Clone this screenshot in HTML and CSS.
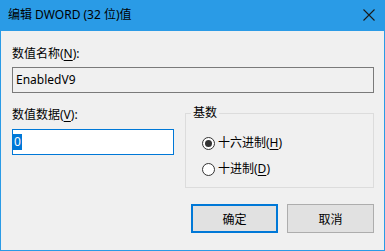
FILE: index.html
```html
<!DOCTYPE html>
<html lang="zh-CN">
<head>
<meta charset="utf-8">
<title>编辑 DWORD (32 位)值</title>
<link rel="stylesheet" href="styles.css">
</head>
<body>
<div class="window">
  <div class="titlebar">
    <span class="title">编辑 DWORD (32 位)值</span>
    <svg class="close" width="12" height="12" viewBox="0 0 12 12"><path d="M0.5 0.5 L11.5 11.5 M11.5 0.5 L0.5 11.5" stroke="#1a1a1a" stroke-width="1.1" fill="none"/></svg>
  </div>
  <div class="content">
    <div class="label">数值名称(<u>N</u>):</div>
    <div class="field readonly">EnabledV9</div>
    <div class="row">
      <div class="leftcol">
        <div class="label">数值数据(<u>V</u>):</div>
        <div class="field active"><span class="sel">0</span></div>
      </div>
      <fieldset class="group">
        <legend>基数</legend>
        <label class="opt"><input type="radio" name="base" checked><span>十六进制(<u>H</u>)</span></label>
        <label class="opt"><input type="radio" name="base"><span>十进制(<u>D</u>)</span></label>
      </fieldset>
    </div>
    <div class="buttons">
      <button class="btn default">确定</button>
      <button class="btn">取消</button>
    </div>
  </div>
</div>
</body>
</html>
```
FILE: styles.css
```css
html, body {
  margin: 0;
  padding: 0;
  background: #f0f0f0;
}
body {
  font-family: "Noto Sans", "Noto Sans CJK SC", sans-serif;
  font-size: 12px;
  color: #000;
}
.window {
  width: 385px;
  height: 251px;
  box-sizing: border-box;
  border: 1px solid #2a9be6;
  border-top: 0;
  background: #f0f0f0;
  display: flex;
  flex-direction: column;
}
.titlebar {
  height: 31px;
  background: #2a9be6;
  display: flex;
  align-items: center;
  justify-content: space-between;
  padding: 0 10px 0 8px;
  margin: 0 -1px;
}
.title {
  line-height: 16px;
  margin-top: -1px;
}
.close {
  display: block;
  margin-top: -1px;
}
.content {
  display: flex;
  flex-direction: column;
  padding: 15px 10px 0 11px;
}
.label {
  line-height: 16px;
  height: 16px;
}
u {
  text-decoration: underline;
  text-underline-offset: 2px;
}
.field {
  box-sizing: border-box;
  height: 26px;
  margin-top: 5px;
  line-height: 24px;
  padding-left: 3px;
}
.readonly {
  border: 1px solid #7a7a7a;
  background: #f0f0f0;
}
.active {
  border: 1px solid #0078d7;
  background: #fff;
  padding-left: 0;
  margin-top: 6px;
  width: 162px;
  display: flex;
  align-items: center;
}
.sel {
  display: block;
  background: #0078d7;
  color: #fff;
  line-height: 16px;
  height: 16px;
  padding: 0 1px 0 1px;
  margin-left: 0;
}
.row {
  display: flex;
  gap: 11px;
  margin-top: 12px;
}
.leftcol {
  padding-top: 2px;
  width: 162px;
}
.group {
  margin: 0;
  width: 189px;
  height: 83px;
  box-sizing: border-box;
  border: 1px solid #dcdcdc;
  padding: 9px 0 5px 0;
  min-width: 0;
}
.group legend {
  line-height: 16px;
  padding: 0 2px;
  margin-left: 5px;
}
.opt {
  display: flex;
  align-items: center;
  height: 26px;
  gap: 3px;
  padding-left: 16px;
}
.opt input {
  appearance: none;
  -webkit-appearance: none;
  margin: 0;
  width: 13px;
  height: 13px;
  border: 1px solid #333;
  border-radius: 50%;
  background: #fff;
  box-sizing: border-box;
  display: flex;
  align-items: center;
  justify-content: center;
}
.opt input:checked::after {
  content: "";
  width: 7px;
  height: 7px;
  border-radius: 50%;
  background: #333;
}
.opt span {
  line-height: 16px;
}
.buttons {
  display: flex;
  justify-content: flex-end;
  gap: 9px;
  margin-top: 16px;
}
.btn {
  width: 87px;
  height: 29px;
  box-sizing: border-box;
  background: #e1e1e1;
  border: 1px solid #adadad;
  font: inherit;
  color: #000;
  padding: 0;
}
.btn.default {
  border: 2px solid #0078d7;
}
```
